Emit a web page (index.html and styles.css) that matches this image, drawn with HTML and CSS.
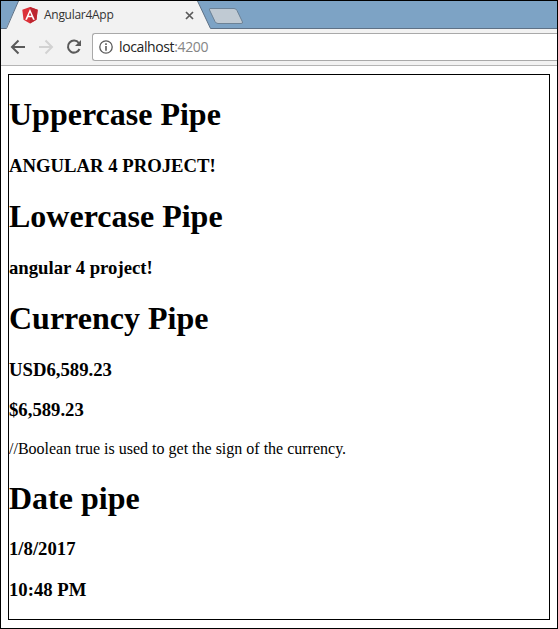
FILE: index.html
```html
<!DOCTYPE html>
<html lang="en">
<head>
<meta charset="utf-8">
<title>Angular4App</title>
<link rel="stylesheet" href="styles.css">
</head>
<body>
<div class="window">
  <header class="tabs">
    <svg class="tab-shapes" width="556" height="28" viewBox="1 1 556 28" aria-hidden="true">
      <path d="M1 28.5H6L18.5 1H197.500L210.500 28.500H557V29H1Z" fill="#f2f2f2"/>
      <path d="M1 28.500H6.500L18.500 1M197.500 1L210.500 28.500H557" fill="none" stroke="#5e7186"/>
      <path d="M210 8.500H234Q236 8.500 237 10.500L242.500 22Q243 23.500 241 23.500H218Q216 23.500 215 21.500L209.500 10Q209 8.500 210 8.500Z" fill="#c0cad3" stroke="#6c8296"/>
    </svg>
    <div class="tab">
      <svg class="logo" width="16" height="17" viewBox="0 0 16 17" aria-hidden="true">
        <path d="M8 0L15.700 2.700L14.500 12.800L8 16.500L1.500 12.800L.3 2.700Z" fill="#dc3038"/>
        <path d="M8 0L15.700 2.700L14.500 12.800L8 16.500Z" fill="#bd2630"/>
        <path d="M8 2L3.200 12.700H5L6 10.300H10L11 12.700H12.800ZM8 5.500L9.400 8.800H6.600Z" fill="#fff" fill-rule="evenodd"/>
      </svg>
      <span class="tab-title">Angular4App</span>
      <svg class="close" width="9" height="9" viewBox="0 0 9 9" aria-hidden="true"><path d="M1 1L8 8M8 1L1 8" stroke="#5a5a5a" stroke-width="1.700"/></svg>
    </div>
  </header>
  <nav class="toolbar">
    <svg width="91" height="36" viewBox="1 29 91 36" fill="none" stroke-width="2" aria-hidden="true">
      <path d="M25 47H12M18.500 40.500L12 47L18.500 53.500" stroke="#5a5a5a"/>
      <path d="M39 47H52M45.500 40.500L52 47L45.500 53.500" stroke="#d2d2d2"/>
      <path d="M78.800 43A6 6 0 1 0 79.500 49" stroke="#5a5a5a"/>
      <path d="M81 40V46H75Z" fill="#5a5a5a"/>
    </svg>
    <div class="address">
      <svg width="14" height="14" viewBox="0 0 14 14" fill="none" stroke="#5a5a5a" aria-hidden="true"><circle cx="7" cy="7" r="6.200" stroke-width="1.300"/><path d="M7 3.300V4.900M7 6V10.700" stroke-width="1.600"/></svg>
      <span class="url">localhost<span class="port">:4200</span></span>
    </div>
  </nav>
  <main class="content">
    <h1>Uppercase Pipe</h1>
    <h3>ANGULAR 4 PROJECT!</h3>
    <h1>Lowercase Pipe</h1>
    <h3>angular 4 project!</h3>
    <h1>Currency Pipe</h1>
    <h3>USD6,589.23</h3>
    <h3>$6,589.23</h3>
    <p>//Boolean true is used to get the sign of the currency.</p>
    <h1>Date pipe</h1>
    <h3>1/8/2017</h3>
    <h3>10:48 PM</h3>
  </main>
</div>
</body>
</html>
```
FILE: styles.css
```css
* { box-sizing: border-box; }
body { margin: 0; background: #fff; }
.window {
  width: 558px;
  height: 629px;
  border: 1px solid #000;
  display: flex;
  flex-direction: column;
  overflow: hidden;
}
.tabs { position: relative; height: 28px; flex: none; background: #7da3c5; }
.tab-shapes { position: absolute; left: 0; top: 0; }
.tab {
  position: relative;
  display: flex;
  align-items: center;
  width: 193px;
  height: 28px;
  padding-left: 21px;
}
.logo { flex: none; }
.tab-title {
  margin-left: 6px;
  font: 12px/16px "Open Sans", sans-serif;
  letter-spacing: -0.28px;
  color: #333;
}
.close { margin-left: auto; }
.toolbar {
  display: flex;
  height: 37px;
  flex: none;
  background: #f2f2f2;
  border-bottom: 1px solid #b5b5b5;
}
.address {
  display: flex;
  align-items: center;
  flex: 1;
  height: 28px;
  margin-top: 4px;
  padding-left: 6px;
  border: 1px solid #a9a9a9;
  border-right: 0;
  border-radius: 3px 0 0 3px;
  background: #fff;
}
.url {
  margin-left: 6px;
  font: 14px/20px "Open Sans", sans-serif;
  letter-spacing: -0.38px;
  color: #222;
}
.port { color: #858585; }
.content {
  display: flow-root;
  width: 542px;
  height: 546px;
  flex: none;
  margin: 8px 0 0 7px;
  border: 1px solid #000;
  font-family: "Liberation Serif", serif;
  color: #000;
}
h1, h3, p { white-space: nowrap; }
h1 { margin: 21.44px 0; font-size: 32px; line-height: 37px; }
h3 { margin: 18.72px 0; font-size: 18.72px; line-height: 22px; }
p { margin: 16px 0; font-size: 16px; line-height: 18px; }
```
